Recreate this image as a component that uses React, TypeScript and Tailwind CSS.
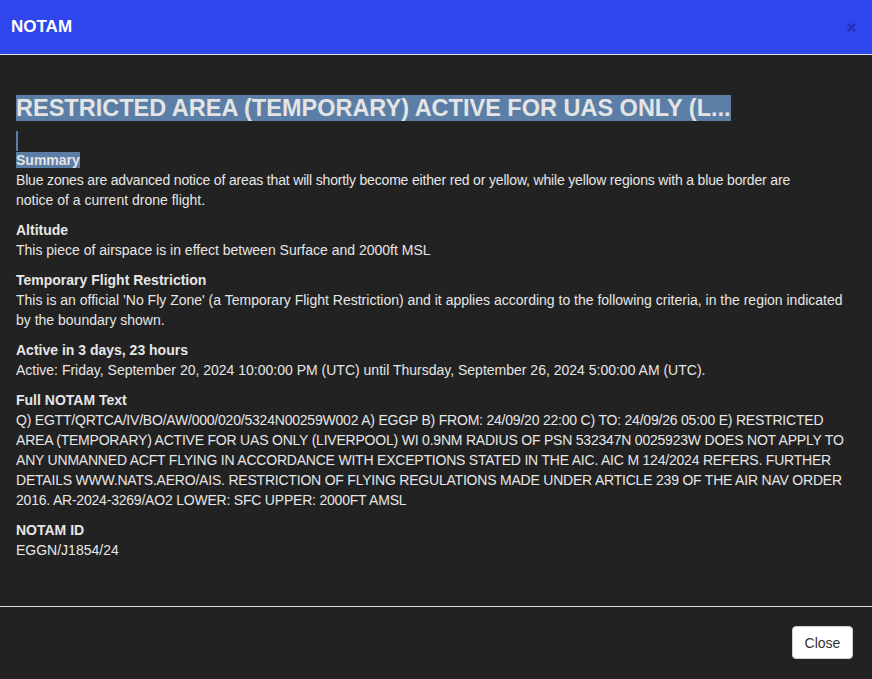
import { X } from 'lucide-react';

type Section = { title: string; lines: string[]; tight?: boolean };

const SECTIONS: Section[] = [
    {
        title: 'Altitude',
        lines: ['This piece of airspace is in effect between Surface and 2000ft MSL'],
    },
    {
        title: 'Temporary Flight Restriction',
        lines: [
            "This is an official 'No Fly Zone' (a Temporary Flight Restriction) and it applies according to the following criteria, in the region indicated",
            'by the boundary shown.',
        ],
    },
    {
        title: 'Active in 3 days, 23 hours',
        lines: ['Active: Friday, September 20, 2024 10:00:00 PM (UTC) until Thursday, September 26, 2024 5:00:00 AM (UTC).'],
    },
    {
        title: 'Full NOTAM Text',
        tight: true,
        lines: [
            'Q) EGTT/QRTCA/IV/BO/AW/000/020/5324N00259W002 A) EGGP B) FROM: 24/09/20 22:00 C) TO: 24/09/26 05:00 E) RESTRICTED',
            'AREA (TEMPORARY) ACTIVE FOR UAS ONLY (LIVERPOOL) WI 0.9NM RADIUS OF PSN 532347N 0025923W DOES NOT APPLY TO',
            'ANY UNMANNED ACFT FLYING IN ACCORDANCE WITH EXCEPTIONS STATED IN THE AIC. AIC M 124/2024 REFERS. FURTHER',
            'DETAILS WWW.NATS.AERO/AIS. RESTRICTION OF FLYING REGULATIONS MADE UNDER ARTICLE 239 OF THE AIR NAV ORDER',
            '2016. AR-2024-3269/AO2 LOWER: SFC UPPER: 2000FT AMSL',
        ],
    },
    {
        title: 'NOTAM ID',
        lines: ['EGGN/J1854/24'],
    },
];

export default function App() {
    return (
        <div
            className="flex h-[679px] w-[872px] flex-col bg-[#222222] text-[#e6e6e6]"
            style={{ fontFamily: '"Liberation Sans", Arial, sans-serif' }}
        >
            <div className="flex h-[55px] shrink-0 items-center justify-between border-b border-[#e2e2e2] bg-[#2f45ee] pl-[11px] pr-[14px]">
                <span className="text-[17px] font-bold text-white">NOTAM</span>
                <X size={13} strokeWidth={3.5} className="text-[#2233b0]" />
            </div>

            <div className="flex-1 px-4 pt-[40px]">
                <h1 className="text-[23.5px] font-bold leading-[27px]">
                    <span className="bg-[#5b7ea6] text-[#e4e4e4]">RESTRICTED AREA (TEMPORARY) ACTIVE FOR UAS ONLY (L...</span>
                </h1>
                <div className="mt-[9px] h-5 w-[2px] bg-[#5b7ea6]" />
                <div className="text-sm">
                    <div className="leading-[19px]">
                        <span className="bg-[#5b7ea6] font-bold text-[#e4e4e4]">Summary</span>
                    </div>
                    <p className="leading-5">
                        <span className="block whitespace-nowrap tracking-[-0.17px]">
                            Blue zones are advanced notice of areas that will shortly become either red or yellow, while yellow regions with a blue border are
                        </span>
                        <span className="block whitespace-nowrap">notice of a current drone flight.</span>
                    </p>
                    {SECTIONS.map(s => (
                        <div key={s.title} className="mt-[10px]">
                            <div className="font-bold leading-5">{s.title}</div>
                            <p className={s.tight ? 'leading-5 tracking-[-0.21px]' : 'leading-5'}>
                                {s.lines.map(line => (
                                    <span key={line} className="block whitespace-nowrap">
                                        {line}
                                    </span>
                                ))}
                            </p>
                        </div>
                    ))}
                </div>
            </div>

            <div className="flex shrink-0 justify-end border-t border-[#e2e2e2] pb-5 pr-[19px] pt-[19px]">
                <button className="h-[33px] w-[61px] rounded-[4px] border border-[#d0d0d0] bg-white text-sm text-[#333333]">
                    Close
                </button>
            </div>
        </div>
    );
}
